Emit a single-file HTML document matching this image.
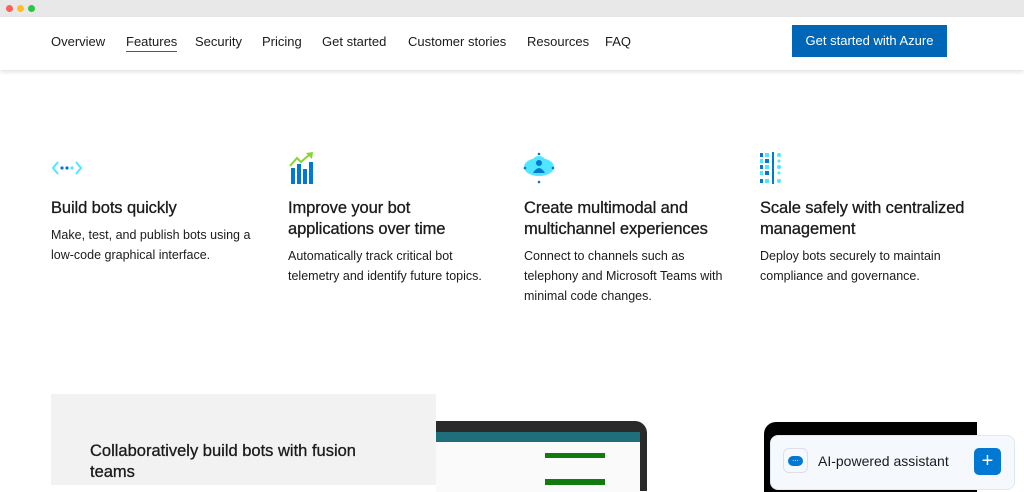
<!DOCTYPE html><html><head><style>
*{margin:0;padding:0;box-sizing:border-box}
body{width:1024px;height:485px;overflow:hidden;background:#fff;font-family:"Liberation Sans",sans-serif;color:#1b1b1b;position:relative}
.top{position:absolute;left:0;top:0;width:1024px;height:17px;background:#e8e8e8}
.dot{position:absolute;top:5px;width:7px;height:7px;border-radius:50%}
.hdr{position:absolute;top:17px;left:0;width:1024px;height:53px;background:#fff;box-shadow:0 2px 4px rgba(0,0,0,.12)}
.nav a{position:absolute;top:17px;font-size:13px;color:#1b1b1b;text-decoration:none}
.btn{position:absolute;left:792px;top:8px;width:155px;height:32px;background:#0067b8;color:#fff;font-size:13px;text-align:center;line-height:32px}
.f{position:absolute;top:198px;width:230px}
.f h3{font-size:16.5px;font-weight:normal;line-height:21px;color:#1b1b1b;-webkit-text-stroke:.3px #1b1b1b;letter-spacing:-.1px;white-space:nowrap}
.f p{font-size:12.5px;line-height:20px;margin-top:6px;white-space:nowrap}
.ic{position:absolute;top:152px}
</style></head><body>
<div class="top"><div class="dot" style="left:6px;background:#fe5f57"></div><div class="dot" style="left:17px;background:#febc2e"></div><div class="dot" style="left:28px;background:#28c840"></div></div>
<div class="hdr"><div class="nav">
<a style="left:51px">Overview</a><a style="left:126px;border-bottom:1px solid #555;padding-bottom:2px">Features</a><a style="left:195px">Security</a><a style="left:262px">Pricing</a><a style="left:322px">Get started</a><a style="left:408px">Customer stories</a><a style="left:527px">Resources</a><a style="left:605px">FAQ</a></div>
<div class="btn">Get started with Azure</div></div>

<svg class="ic" style="left:51px" width="32" height="32" viewBox="0 0 32 32"><path d="M7 10 L2 16 L7 22 M25 10 L30 16 L25 22" stroke="#50e6ff" stroke-width="2" fill="none"/><circle cx="11" cy="16" r="1.6" fill="#0078d4"/><circle cx="16" cy="16" r="1.6" fill="#0078d4"/><circle cx="21" cy="16" r="1.6" fill="#50e6ff"/></svg>
<svg class="ic" style="left:288px" width="32" height="32" viewBox="0 0 32 32"><path d="M2 14 L9 6 L13 10 L22 2" stroke="#86d633" stroke-width="2" fill="none"/><path d="M18 1 L25 0 L24 7Z" fill="#86d633"/><rect x="3" y="16" width="4" height="16" fill="#0078d4"/><rect x="9" y="12" width="4" height="20" fill="#0078d4"/><rect x="15" y="17" width="4" height="15" fill="#0078d4"/><rect x="21" y="10" width="4" height="22" fill="#0078d4"/></svg>
<svg class="ic" style="left:523px" width="34" height="32" viewBox="0 0 34 32"><circle cx="16" cy="2" r="1.3" fill="#0078d4"/><circle cx="16" cy="30" r="1.3" fill="#0078d4"/><ellipse cx="16" cy="15" rx="15" ry="9" fill="#50e6ff"/><circle cx="16" cy="11" r="7" fill="#50e6ff"/><circle cx="16" cy="11" r="3" fill="#0078d4"/><path d="M10 21 Q16 11 22 21Z" fill="#0078d4"/><circle cx="2" cy="16" r="1.3" fill="#0078d4"/><circle cx="30" cy="16" r="1.3" fill="#0078d4"/></svg>
<svg class="ic" style="left:760px" width="32" height="32" viewBox="0 0 32 32"><g fill="#0078d4"><rect x="0" y="1" width="3" height="4"/><rect x="0" y="13" width="3" height="4"/><rect x="0" y="27" width="3" height="4"/><rect x="5" y="7" width="4" height="4"/><rect x="5" y="19" width="4" height="4"/><rect x="12" y="0" width="2" height="32"/></g><g fill="#50e6ff"><rect x="5" y="1" width="4" height="4"/><rect x="5" y="13" width="4" height="4"/><rect x="5" y="27" width="4" height="4"/><rect x="0" y="7" width="3" height="4"/><rect x="0" y="19" width="3" height="4"/><circle cx="19" cy="3" r="2"/><circle cx="19" cy="15" r="2"/><circle cx="19" cy="29" r="2"/><circle cx="19" cy="9" r="1.5"/><circle cx="19" cy="21" r="1.5"/></g></svg>

<div class="f" style="left:51px"><h3>Build bots quickly</h3><p>Make, test, and publish bots using a<br>low-code graphical interface.</p></div>
<div class="f" style="left:288px"><h3>Improve your bot<br>applications over time</h3><p>Automatically track critical bot<br>telemetry and identify future topics.</p></div>
<div class="f" style="left:524px"><h3>Create multimodal and<br>multichannel experiences</h3><p>Connect to channels such as<br>telephony and Microsoft Teams with<br>minimal code changes.</p></div>
<div class="f" style="left:760px"><h3>Scale safely with centralized<br>management</h3><p>Deploy bots securely to maintain<br>compliance and governance.</p></div>

<div style="position:absolute;left:436px;top:421px;width:211px;height:70px;background:#2a2a2a;border-radius:0 12px 0 0"></div>
<div style="position:absolute;left:436px;top:432px;width:204px;height:10px;background:#1f6e7c"></div>
<div style="position:absolute;left:436px;top:442px;width:204px;height:50px;background:#fafafa"></div>
<div style="position:absolute;left:545px;top:453px;width:60px;height:5px;background:#107c10"></div>
<div style="position:absolute;left:545px;top:479px;width:60px;height:6px;background:#107c10"></div>
<div style="position:absolute;left:51px;top:394px;width:385px;height:91px;background:#f2f2f2"></div>
<div style="position:absolute;left:90px;top:441px;font-size:16.5px;line-height:21px;white-space:nowrap;-webkit-text-stroke:.3px #1b1b1b">Collaboratively build bots with fusion<br>teams</div>
<div style="position:absolute;left:764px;top:422px;width:213px;height:70px;background:#000;border-radius:12px 0 0 0"></div>
<div style="position:absolute;left:770px;top:435px;width:245px;height:55px;background:#f5f9fd;border:1px solid #dde8f2;border-radius:8px"></div>
<div style="position:absolute;left:783px;top:448px;width:25px;height:25px;border:1px solid #dde;border-radius:6px;background:#f5f9fd"></div>
<div style="position:absolute;left:788px;top:456px;width:15px;height:10px;background:#0078d4;border-radius:5px;color:#fff;font-size:8px;line-height:6px;text-align:center">...</div>
<div style="position:absolute;left:818px;top:453px;font-size:14px">AI-powered assistant</div>
<div style="position:absolute;left:974px;top:448px;width:27px;height:27px;background:#0078d4;border-radius:5px;color:#fff;font-size:20px;line-height:26px;text-align:center">+</div>
</body></html>
